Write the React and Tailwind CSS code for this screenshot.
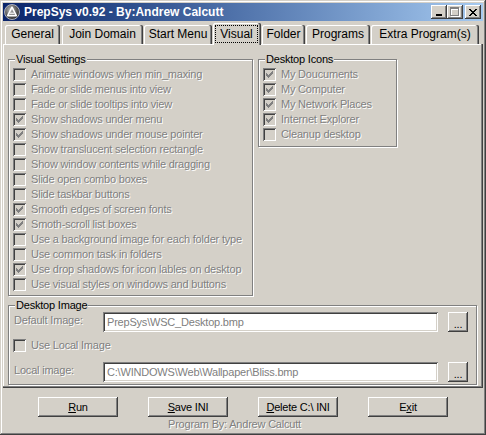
import React from 'react';

// Colores clásicos de Windows 2000
const face = 'bg-[#d4d0c8]';
const grayText = 'text-[#808080] [text-shadow:1px_1px_0_#fff]';

const visualItems = [
  ['Animate windows when min_maxing', false],
  ['Fade or slide menus into view', false],
  ['Fade or slide tooltips into view', false],
  ['Show shadows under menu', true],
  ['Show shadows under mouse pointer', true],
  ['Show translucent selection rectangle', false],
  ['Show window contents while dragging', false],
  ['Slide open combo boxes', false],
  ['Slide taskbar buttons', false],
  ['Smooth edges of screen fonts', true],
  ['Smoth-scroll list boxes', true],
  ['Use a background image for each folder type', false],
  ['Use common task in folders', false],
  ['Use drop shadows for icon lables on desktop', true],
  ['Use visual styles on windows and buttons', false],
];

const iconItems = [
  ['My Doucuments', true],
  ['My Computer', true],
  ['My Network Places', true],
  ['Internet Explorer', true],
  ['Cleanup desktop', false],
];

const tabs = [
  { label: 'General', w: 'w-[55px]', ml: 'ml-[2px]' },
  { label: 'Join Domain', w: 'w-[81px]', ml: 'ml-[2px]' },
  { label: 'Start Menu', w: 'w-[68px]', ml: 'ml-[1px]' },
  { label: 'Visual', w: 'w-[48px]', ml: 'ml-[1px]', active: true },
  { label: 'Folder', w: 'w-[43px]', ml: 'ml-[1px]' },
  { label: 'Programs', w: 'w-[64px]', ml: 'ml-[1px]' },
  { label: 'Extra Program(s)', w: 'w-[108px]', ml: 'ml-[1px]' },
];

const CheckBox = ({ on }) => (
  <span className="flex w-[13px] h-[13px] shrink-0 items-center justify-center bg-[#d4d0c8] shadow-[inset_1px_1px_#808080,inset_-1px_-1px_#fff,inset_2px_2px_#404040,inset_-2px_-2px_#d4d0c8]">
    {on && (
      <svg width="7" height="7" viewBox="0 0 7 7" shapeRendering="crispEdges">
        <path d="M0 2h1v1h1v1h1v-1h1v-1h1v-1h1v-1h1v3h-1v1h-1v1h-1v1h-1v1h-1v-1h-1v-1h-1z" fill="#808080" />
      </svg>
    )}
  </span>
);

const CheckRow = ({ label, on }) => (
  <div className="flex h-[15px] items-center">
    <CheckBox on={on} />
    <span className={`ml-[5px] whitespace-nowrap ${grayText}`}>{label}</span>
  </div>
);

const Group = ({ title, className, children }) => (
  <fieldset className={`border border-[#808080] shadow-[1px_1px_0_#fff,inset_1px_1px_0_#fff] pl-[4px] ${className}`}>
    <legend className={`ml-[2px] px-[1px] leading-[14px] text-black ${face}`}>{title}</legend>
    {children}
  </fieldset>
);

const Button = ({ children }) => (
  <button className="flex w-[80px] h-[20px] items-center justify-center bg-[#d4d0c8] text-black shadow-[inset_-1px_-1px_#404040,inset_1px_1px_#fff,inset_-2px_-2px_#808080,inset_2px_2px_#d4d0c8]">
    {children}
  </button>
);

const SmallButton = () => (
  <button className="flex w-[20px] h-[20px] items-end justify-center pb-[3px] leading-[10px] bg-[#d4d0c8] text-black shadow-[inset_-1px_-1px_#404040,inset_1px_1px_#fff,inset_-2px_-2px_#808080,inset_2px_2px_#d4d0c8]">
    ...
  </button>
);

const TextBox = ({ value }) => (
  <div className="flex w-[335px] h-[20px] items-center pl-[4px] bg-white text-[#808080] whitespace-nowrap shadow-[inset_1px_1px_#808080,inset_-1px_-1px_#fff,inset_2px_2px_#404040,inset_-2px_-2px_#d4d0c8]">
    {value}
  </div>
);

const CapButton = ({ children }) => (
  <span className="flex w-[16px] h-[14px] items-center justify-center bg-[#d4d0c8] shadow-[inset_-1px_-1px_#404040,inset_1px_1px_#fff,inset_-2px_-2px_#808080,inset_2px_2px_#d4d0c8]">
    {children}
  </span>
);

const AppIcon = () => (
  <svg width="16" height="16" viewBox="0 0 16 16">
    <defs>
      <radialGradient id="ic" cx="0.4" cy="0.35" r="0.7">
        <stop offset="0" stopColor="#b8b8b8" />
        <stop offset="0.6" stopColor="#5a5a5a" />
        <stop offset="1" stopColor="#2a2a2a" />
      </radialGradient>
    </defs>
    <circle cx="8" cy="8" r="7.5" fill="url(#ic)" stroke="#c8ccd8" strokeWidth="0.8" />
    <path d="M8 3.2 L12.3 11.6 H3.7 Z" fill="none" stroke="#fff" strokeWidth="1.6" strokeLinejoin="round" />
    <path d="M5.6 9.2 H10.4" stroke="#fff" strokeWidth="1.2" />
  </svg>
);

export default function App() {
  return (
    <div
      className={`flex flex-col w-[486px] h-[435px] p-[3px] ${face} text-[11px] tracking-[-0.2px] leading-[13px] font-['Liberation_Sans',Arial,sans-serif] shadow-[inset_-1px_-1px_#404040,inset_1px_1px_#d4d0c8,inset_-2px_-2px_#808080,inset_2px_2px_#fff]`}
    >
      {/* BARRA DE TÍTULO */}
      <div className="flex h-[18px] items-center pl-[1px] pr-[2px] bg-gradient-to-r from-[#0a246a] to-[#a6caf0]">
        <AppIcon />
        <span className="ml-[4px] text-[12px] tracking-normal font-bold text-white whitespace-nowrap">
          PrepSys v0.92 - By:Andrew Calcutt
        </span>
        <div className="ml-auto flex items-center">
          <CapButton>
            <svg width="8" height="8" viewBox="0 0 8 8" shapeRendering="crispEdges">
              <rect x="1" y="6" width="6" height="2" fill="#000" />
            </svg>
          </CapButton>
          <CapButton>
            <svg width="10" height="10" viewBox="0 0 10 10" shapeRendering="crispEdges">
              <path d="M1 1h9v9H1zM2 3v6h7V3z" fill="#fff" fillRule="evenodd" />
              <path d="M0 0h9v9H0zM1 2v6h7V2z" fill="#808080" fillRule="evenodd" />
            </svg>
          </CapButton>
          <span className="ml-[2px]">
            <CapButton>
              <svg width="8" height="7" viewBox="0 0 8 7" shapeRendering="crispEdges">
                <path
                  d="M0 0h2v1H0zM6 0h2v1H6zM1 1h2v1H1zM5 1h2v1H5zM2 2h4v1H2zM3 3h2v1H3zM2 4h4v1H2zM1 5h2v1H1zM5 5h2v1H5zM0 6h2v1H0zM6 6h2v1H6z"
                  fill="#000"
                />
              </svg>
            </CapButton>
          </span>
        </div>
      </div>

      {/* PESTAÑAS */}
      <div className="mt-[2px] flex h-[21px] items-end text-[12px] tracking-normal">
        {tabs.map((t) =>
          t.active ? (
            <div
              key={t.label}
              className={`relative z-10 -mb-[1px] flex h-[22px] ${t.w} ${t.ml} rounded-t-[2px] ${face} pt-[2px] pb-[2px] pl-[2px] pr-[3px] shadow-[inset_-1px_0_#404040,inset_-2px_0_#808080,inset_1px_1px_#fff]`}
            >
              <div className="flex flex-1 items-center justify-center border border-dotted border-black text-black">
                {t.label}
              </div>
            </div>
          ) : (
            <div
              key={t.label}
              className={`flex h-[19px] ${t.w} ${t.ml} items-center justify-center rounded-t-[2px] ${face} text-black whitespace-nowrap shadow-[inset_-1px_0_#404040,inset_-2px_0_#808080,inset_1px_1px_#fff]`}
            >
              {t.label}
            </div>
          )
        )}
      </div>

      {/* PANEL */}
      <div className="h-[344px] pt-[8px] pl-[5px] shadow-[inset_-1px_-1px_#404040,inset_-2px_-2px_#808080,inset_1px_1px_#fff]">
        <div className="flex items-start">
          <Group title="Visual Settings" className="w-[245px] h-[244px] pt-[1px]">
            {visualItems.map(([label, on]) => (
              <CheckRow key={label} label={label} on={on} />
            ))}
          </Group>
          <Group title="Desktop Icons" className="ml-[5px] w-[139px] h-[95px] pt-[1px]">
            {iconItems.map(([label, on]) => (
              <CheckRow key={label} label={label} on={on} />
            ))}
          </Group>
        </div>

        <Group title="Desktop Image" className="mt-[2px] w-[469px] h-[87px]">
          <div className="flex h-[20px] items-center">
            <span className={`w-[90px] pl-[1px] pb-[3px] ${grayText}`}>Default Image:</span>
            <TextBox value="PrepSys\WSC_Desktop.bmp" />
            <span className="ml-[10px]">
              <SmallButton />
            </span>
          </div>
          <div className="mt-[7px] flex h-[13px] items-center">
            <CheckBox on={false} />
            <span className={`ml-[5px] ${grayText}`}>Use Local Image</span>
          </div>
          <div className="mt-[10px] flex h-[20px] items-center">
            <span className={`w-[90px] pl-[1px] pb-[3px] ${grayText}`}>Local image:</span>
            <TextBox value="C:\WINDOWS\Web\Wallpaper\Bliss.bmp" />
            <span className="ml-[10px]">
              <SmallButton />
            </span>
          </div>
        </Group>
      </div>

      {/* BOTONES */}
      <div className="mt-[9px] flex justify-center gap-[30px]">
        <Button>
          <span className="underline">R</span>un
        </Button>
        <Button>
          <span className="underline">S</span>ave INI
        </Button>
        <Button>
          <span className="underline">D</span>elete C:\ INI
        </Button>
        <Button>
          E<span className="underline">x</span>it
        </Button>
      </div>

      {/* PIE */}
      <div className={`mt-[1px] h-[13px] pl-[165px] whitespace-nowrap ${grayText}`}>Program By: Andrew Calcutt</div>
    </div>
  );
}
